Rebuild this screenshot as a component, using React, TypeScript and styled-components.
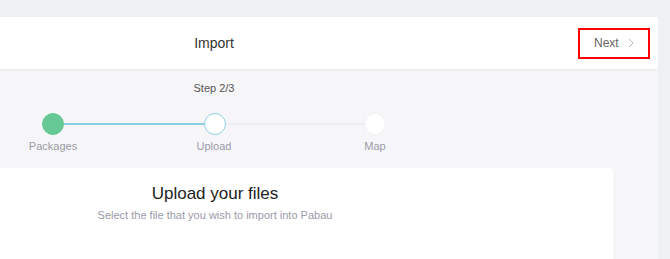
import React from "react";
import styled, { createGlobalStyle } from "styled-components";

const GlobalStyle = createGlobalStyle`
  html, body {
    margin: 0;
    padding: 0;
    background: #eff0f4;
    font-family: "Liberation Sans", Arial, sans-serif;
  }
  * { box-sizing: border-box; }
`;

const Page = styled.div`
  padding-top: 17px;
  min-height: 259px;
`;

const Panel = styled.div`
  width: 658px;
  background: #f6f6f8;
  min-height: 242px;
  overflow: hidden;
`;

const Header = styled.header`
  height: 52px;
  background: #ffffff;
  box-shadow: 0 1px 2px rgba(0, 0, 0, 0.06);
  display: flex;
  align-items: center;
  position: relative;
`;

const Title = styled.h1`
  width: 428px;
  margin: 0;
  text-align: center;
  font-size: 14px;
  font-weight: 400;
  color: #333333;
  line-height: 18px;
`;

const NextButton = styled.button`
  margin-left: auto;
  margin-right: 8px;
  width: 72px;
  height: 31px;
  padding: 0 0 0 14px;
  border: 2px solid #ff0000;
  background: #ffffff;
  display: flex;
  align-items: center;
  gap: 9px;
  font-family: inherit;
  font-size: 12px;
  color: #666666;
  cursor: pointer;
`;

const StepCount = styled.div`
  width: 428px;
  text-align: center;
  padding-top: 13px;
  font-size: 11px;
  line-height: 13px;
  color: #555555;
`;

const Track = styled.div`
  display: flex;
  align-items: center;
  padding-left: 42px;
  margin-top: 18px;
`;

const Dot = styled.div<{ $state: "done" | "active" | "todo" }>`
  width: 22px;
  height: 22px;
  border-radius: 50%;
  flex: none;
  background: ${(p) => (p.$state === "done" ? "#66c995" : "#ffffff")};
  border: 1px solid
    ${(p) =>
      p.$state === "done" ? "#66c995" : p.$state === "active" ? "#8ccfe5" : "#f1f1f4"};
`;

const Connector = styled.div<{ $done: boolean; $w: number }>`
  width: ${(p) => p.$w}px;
  height: 2px;
  background: ${(p) => (p.$done ? "#8bcfe4" : "#eeeef2")};
`;

const Labels = styled.div`
  display: grid;
  grid-template-columns: 100px 100px 100px;
  column-gap: 61px;
  padding-left: 3px;
  margin-top: 5px;
`;

const Label = styled.span`
  text-align: center;
  font-size: 11px;
  line-height: 13px;
  color: #9b9ba7;
`;

const Card = styled.section`
  width: 613px;
  margin-top: 15px;
  min-height: 120px;
  background: #ffffff;
  border-radius: 0 4px 0 0;
`;

const CardBody = styled.div`
  width: 430px;
  text-align: center;
  padding-top: 16px;
`;

const CardTitle = styled.h2`
  margin: 0;
  font-size: 17px;
  font-weight: 400;
  line-height: 20px;
  color: #222222;
`;

const CardSub = styled.p`
  margin: 5px 0 0;
  font-size: 11px;
  line-height: 13px;
  color: #9a9aa8;
`;

const Chevron = () => (
  <svg width="6" height="10" viewBox="0 0 6 10" fill="none">
    <path d="M1 1l4 4-4 4" stroke="#bbbbbb" strokeWidth="1" />
  </svg>
);

export default function App() {
  return (
    <>
      <GlobalStyle />
      <Page>
        <Panel>
          <Header>
            <Title>Import</Title>
            <NextButton>
              Next <Chevron />
            </NextButton>
          </Header>
          <StepCount>Step 2/3</StepCount>
          <Track>
            <Dot $state="done" />
            <Connector $done $w={140} />
            <Dot $state="active" />
            <Connector $done={false} $w={138} />
            <Dot $state="todo" />
          </Track>
          <Labels>
            <Label>Packages</Label>
            <Label>Upload</Label>
            <Label>Map</Label>
          </Labels>
          <Card>
            <CardBody>
              <CardTitle>Upload your files</CardTitle>
              <CardSub>Select the file that you wish to import into Pabau</CardSub>
            </CardBody>
          </Card>
        </Panel>
      </Page>
    </>
  );
}
